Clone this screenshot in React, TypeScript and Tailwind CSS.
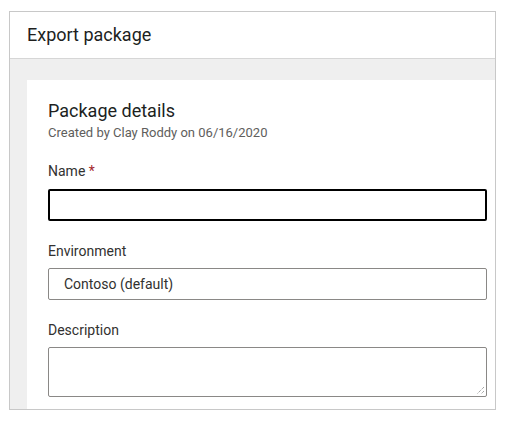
import React from "react";

export default function App() {
  const font = { fontFamily: 'Roboto, "Noto Sans", sans-serif' };
  return (
    <div className="w-[513px] h-[426px] bg-white" style={font}>
      <div className="ml-[9px] mt-[11px] w-[487px] h-[399px] border border-[#c8c8c8] flex flex-col overflow-hidden">
        <div className="h-[47px] border-b border-[#d6d6d6] pl-[17px] pt-[11px] text-[18px] leading-[24px] text-[#201f1e] shrink-0">
          Export package
        </div>
        <div className="flex-1 bg-[#efefef] pl-[17px] pt-[21px] overflow-hidden">
          <div className="bg-white h-full pl-[21px] pr-[8px] pt-[19px]">
            <div className="text-[18px] leading-[24px] text-[#201f1e]">Package details</div>
            <div className="text-[13px] leading-[16px] text-[#605e5c] mt-[2px]">Created by Clay Roddy on 06/16/2020</div>
            <div className="mt-[20px] text-[14px] leading-[20px] text-[#323130]">
              Name <span className="text-[#a4262c]">*</span>
            </div>
            <div className="mt-[8px] h-[32px] border-2 border-black rounded-[2px]"></div>
            <div className="mt-[20px] text-[14px] leading-[20px] text-[#323130]">Environment</div>
            <div className="mt-[7px] h-[32px] border border-[#8a8886] rounded-[2px] flex items-center pl-[15px] text-[14px] text-[#323130]">
              Contoso (default)
            </div>
            <div className="mt-[20px] text-[14px] leading-[20px] text-[#323130]">Description</div>
            <div className="mt-[7px] h-[50px] border border-[#8a8886] rounded-[2px] relative">
              <svg className="absolute right-[1px] bottom-[1px]" width="9" height="9" viewBox="0 0 9 9">
                <line x1="8" y1="1" x2="1" y2="8" stroke="#808080" strokeWidth="1" strokeDasharray="1 1" />
                <line x1="8" y1="5" x2="5" y2="8" stroke="#808080" strokeWidth="1" strokeDasharray="1 1" />
              </svg>
            </div>
          </div>
        </div>
      </div>
    </div>
  );
}
